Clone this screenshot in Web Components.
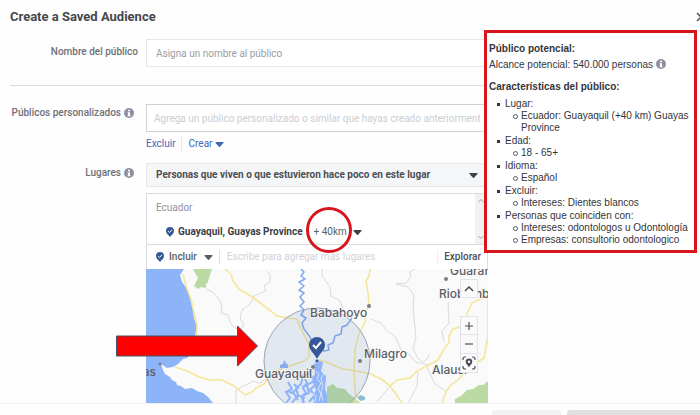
<!DOCTYPE html>
<html lang="es">
<head>
<meta charset="utf-8">
<meta name="viewport" content="width=device-width, initial-scale=1">
<title>Create a Saved Audience</title>
<style>
  body {
    margin: 0;
    background: #fefefe;
    color: #4b4f56;
    font-family: Roboto, "Liberation Sans", sans-serif;
    font-size: 10px;
    line-height: 14px;
  }
</style>
</head>
<body>
<audience-dialog></audience-dialog>

<script>
class InfoIcon extends HTMLElement {
  connectedCallback() {
    this.attachShadow({ mode: 'open' });
    this.shadowRoot.innerHTML = `
      <style>
        :host { display: inline-flex; vertical-align: middle; }
      </style>
      <svg width="10" height="10" viewBox="0 0 10 10" aria-hidden="true">
        <circle cx="5" cy="5" r="5" fill="#8d90a0"/>
        <path d="M4 1.700h2v1.600H4zM3.600 4.200H6v3h.6v1H3.500v-1h.6v-2h-.5z" fill="#fff"/>
      </svg>
    `;
  }
}
customElements.define('info-icon', InfoIcon);

class CaretIcon extends HTMLElement {
  connectedCallback() {
    this.attachShadow({ mode: 'open' });
    this.shadowRoot.innerHTML = `
      <style>
        :host { display: inline-flex; pointer-events: none; }
      </style>
      <svg width="9" height="5" viewBox="0 0 9 5" aria-hidden="true">
        <path d="M1 0h7q1 .2.4 1L5 4.700q-.5.5-1 0L.6 1Q0 .2 1 0z" fill="currentColor"/>
      </svg>
    `;
  }
}
customElements.define('caret-icon', CaretIcon);

class CheckPin extends HTMLElement {
  connectedCallback() {
    this.attachShadow({ mode: 'open' });
    this.shadowRoot.innerHTML = `
      <style>
        :host { display: inline-flex; }
      </style>
      <svg width="8" height="10" viewBox="0 0 8 10" aria-hidden="true">
        <path d="M4 0a4 4 0 0 1 4 4c0 2.500-2.500 4-4 6C2.500 8 0 6.500 0 4a4 4 0 0 1 4-4z" fill="#365899"/>
        <path d="M2.200 4.200l1.300 1.300 2.400-2.600" fill="none" stroke="#fff" stroke-width="1"/>
      </svg>
    `;
  }
}
customElements.define('check-pin', CheckPin);

class FormRow extends HTMLElement {
  connectedCallback() {
    this.attachShadow({ mode: 'open' });
    this.shadowRoot.innerHTML = `
      <style>
        :host {
          display: grid;
          grid-template-columns: 128px minmax(0, 1fr);
          column-gap: 8px;
          align-items: start;
        }
        .label {
          display: flex;
          justify-content: flex-end;
          align-items: center;
          gap: 3px;
          padding-top: var(--label-top, 2px);
          padding-right: var(--label-right, 4px);
          font-weight: 500;
          color: #6d7078;
        }
      </style>
      <div class="label"><slot name="label"></slot></div>
      <div><slot></slot></div>
    `;
  }
}
customElements.define('form-row', FormRow);

class PlaceMap extends HTMLElement {
  connectedCallback() {
    this.attachShadow({ mode: 'open' });
    this.shadowRoot.innerHTML = `
      <style>
        :host { display: block; position: relative; height: 134px; }
        .map { display: block; width: 100%; height: 100%; }
        .map text {
          font: 500 12px Inter, "Liberation Sans", sans-serif;
          fill: #5c5f66;
        }
        .halo {
          stroke: #fafafa;
          stroke-width: 2px;
          stroke-opacity: .6;
          paint-order: stroke;
        }
        .controls {
          position: absolute;
          top: 10px;
          right: 10px;
          display: flex;
          flex-direction: column;
        }
        button {
          display: flex;
          align-items: center;
          justify-content: center;
          width: 18px;
          height: 19px;
          padding: 0;
          border: 1px solid #e0e3e9;
          background: #fafafb;
          color: #4b4f56;
        }
        .up { margin-bottom: 18px; }
        .out { border-top: 0; }
        .arrow { position: absolute; top: 56px; left: -31px; }
      </style>
      <svg class="map" viewBox="146 269 342 134" preserveAspectRatio="xMinYMin slice" role="img" aria-label="Mapa de Guayaquil">
        <rect x="146" y="269" width="700" height="300" fill="#fafafa"/>
        <path d="M146 269H184L180 275 182 282 185 286 189 294 191 302 193 310 194 318 197 326 196 332 194 339 193 348 190 355 187 358 183 359 178 364 173 367 167 368 161 364 163 370 165 374 170 377 172 380 176 382 177 385 181 386 185 389 192 388 197 391 203 393 208 397 213 403H146z" fill="#8db4f9"/>
        <path d="M193 269h19l-2 6-2 7-2 2v4l-5-1-3 2-4-3 2-4 2-4-3-5z" fill="#b9dba3"/>
        <path d="M327 387l6-3 4 4 8 1 4 5 6 4 5 5h-33zM455 399l6-3 6-6 6-1 6-4 4 0 5-4v22h-33z" fill="#b9dba3"/>

        <g fill="none" stroke="#d8dadd" stroke-width="1">
          <path d="M206 289L213 292 219 299 222 306 221 313 228 315 231 324 238 330 244 326 240 318 242 310 251 303 254 296 266 291 264 286 270 282 270 274 266 271"/>
          <path d="M236 404v-14l10-5 7-4 7 2 7-5M322 269l0 7 8 11 1 9 8 4 6 12 12 7M371 319l10 4 6 8 8 5 6 14 7 3 7 9 14 3"/>
          <path d="M396 284l10-1 5-7-1-4 5-3M396 284l12 3 6 8-1 11 1 12 2 19-3 12 4 7M416 357l7 5 4-3 2-5M448 302l1 21-7 8 2 11M427 367l8 17 12 8M390 386l-13 16M418 372l-1 14-9 17"/>
        </g>

        <g fill="none" stroke="#f5e69a" stroke-width="1.600" stroke-linejoin="round">
          <path d="M183 274L186 286 191 299 194 313 197 326 196 338"/>
          <path d="M225 269l6 5 2 7 7 9 11 6 12 9 14 11 10 2 10 1 5 12 7 13 0 13-5 4-17 6"/>
          <path d="M175 367l12 4 12 6 11 3h12l12 6 11 9 7-3 4-4 8-4 6-8 17-11"/>
          <path d="M370 269l-1 7-3 5 2 12 1 12-3 7-1 10-6 12-4 15-1 23 2 31"/>
          <path d="M320 360l11 4 12 5 14 2 14 3 10 5 9 7 6 8 6 9M390 386l7-6 13-2 7-7 8-4 13-7 6-11 5-6 0-7 4-7 10-3 4-12 5-11 16-8"/>
          <path d="M488 291v45l-4 22-16 10-8 10-10 8-4 6-4 11"/>
        </g>

        <g fill="none" stroke="#7fa8ee" stroke-width="1.500" stroke-linejoin="round">
          <path d="M301 269l3 3-3 4 4 3-6 3 5 4-5 4 5 3-4 4 4 5-4 4 4 4-3 5 5 3-4 5 2 6 6 8 3 9"/>
          <path d="M352 318l-5 7-5 2-1 7-6 2-2 7-5 2 1 5-5 1-4-5"/>
        </g>
        <path d="M280 368v-3l3-1 1-4 2 3 1 2 1-2v5z" fill="#8db4f9"/>

        <circle cx="317" cy="361" r="53" fill="#6c8cbc" fill-opacity=".17" stroke="#9ca4b4" stroke-width="1"/>

        <path d="M314 364l5-4 4 3-2 8 5 5-1 13 2 6v8h-13l-1-7 3-6-3-7 2-9z" fill="#8db4f9"/>
        <path d="M312 369l-4 5-5 2-2 8-5 4 2 7-6 8M310 373l4 8-7 4 2 8-7 3 2 7M294 384l4 4-6 5-4-2M288 382l4 7-6 3 4 6-4 5M302 387l6-2M297 395l8 3M315 385l-5 5 5 5-6 7M305 379l2 4-4 5 3 5-4 3 1 7M293 392l5 8M316 375l-4 4" fill="none" stroke="#8db4f9" stroke-width="2"/>
        <path d="M316 371l3 3-2 5 4 4-3 6 3 5-2 7M323 368l1 6-3 4 2 8-2 6 2 9M312 393l4 3-1 6" fill="none" stroke="#dce6f7" stroke-width="1"/>
        <path d="M357 397l4-2 4 2 0 3-5 1z" fill="#8fbcd4"/>

        <g fill="#7c7e82">
          <circle cx="369" cy="306" r="2"/>
          <circle cx="360" cy="361" r="2"/>
          <circle cx="446" cy="279" r="2"/>
          <circle cx="313" cy="367" r="2"/>
          <circle cx="160" cy="364" r="1.500"/>
        </g>

        <text x="156" y="376" text-anchor="end">as</text>
        <g class="halo">
          <text x="255" y="378">Guayaquil</text>
          <text x="310" y="317">Babahoyo</text>
          <text x="364" y="358">Milagro</text>
          <text x="450" y="275">Guaranda</text>
          <text x="439" y="298">Riobamba</text>
          <text x="432" y="374">Alausí</text>
        </g>

        <path d="M317 337a8 8 0 0 1 8 8c0 5-5 8-8 14-3-6-8-9-8-14a8 8 0 0 1 8-8z" fill="#365899"/>
        <path d="M313 345l3 3 5-6" fill="none" stroke="#fff" stroke-width="2"/>
        <circle cx="317" cy="361" r="2" fill="#365899" stroke="#fff" stroke-width=".6"/>
      </svg>
      <div class="controls">
        <button class="up" aria-label="Contraer">
          <svg width="10" height="6" viewBox="0 0 10 6"><path d="M1 5l4-4 4 4" fill="none" stroke="currentColor" stroke-width="1.500"/></svg>
        </button>
        <button aria-label="Acercar">
          <svg width="10" height="10" viewBox="0 0 10 10"><path d="M5 1v8M1 5h8" stroke="currentColor" stroke-width="1.200"/></svg>
        </button>
        <button class="out" aria-label="Alejar">
          <svg width="10" height="10" viewBox="0 0 10 10"><path d="M1 5h8" stroke="currentColor" stroke-width="1.200"/></svg>
        </button>
        <button class="out" aria-label="Marcar ubicación">
          <svg width="14" height="14" viewBox="0 0 14 14" fill="none" stroke="currentColor">
            <path d="M1 4V3q0-2 2-2h1M10 1h1q2 0 2 2v1M13 10v1q0 2-2 2h-1M4 13H3q-2 0-2-2v-1" stroke-width="1.200"/>
            <path d="M7 2.500a3.300 3.300 0 0 1 3.300 3.300C10.300 8 8 9 7 11.500 6 9 3.700 8 3.700 5.800A3.300 3.300 0 0 1 7 2.500z" fill="currentColor" stroke="none"/>
            <circle cx="7" cy="5.800" r="1.200" fill="#fff" stroke="none"/>
          </svg>
        </button>
      </div>
      <svg class="arrow" width="144" height="42" viewBox="0 0 144 42" aria-hidden="true">
        <path d="M1.500 11h121V1l20 20-20 20V31H1.500z" fill="#fe0000" stroke="#44546a" stroke-width="1"/>
      </svg>
    `;
  }
}
customElements.define('place-map', PlaceMap);

class PlacePicker extends HTMLElement {
  connectedCallback() {
    this.attachShadow({ mode: 'open' });
    this.shadowRoot.innerHTML = `
      <style>
        :host { display: block; border: 1px solid #d9dce2; border-bottom: 0; background: #fff; }
        .selected {
          display: grid;
          grid-template-columns: minmax(0, 1fr) 12px;
          height: 50px;
          border-bottom: 1px solid #d9dce2;
        }
        .country { padding: 7px 9px 0; color: #8f939b; }
        .place {
          display: flex;
          align-items: center;
          gap: 4px;
          padding: 10px 0 0 19px;
          font-weight: 700;
          color: #3c4047;
        }
        .scroll {
          display: flex;
          flex-direction: column;
          justify-content: space-between;
          padding: 4px 2px;
          background: #f1f1f2;
        }
        .search { display: flex; align-items: center; height: 24px; padding: 0 6px 0 9px; }
        button, input {
          font: inherit;
          color: inherit;
          background: none;
          border: 0;
          padding: 0;
          margin: 0;
        }
        button { display: flex; align-items: center; }
        .radius { position: relative; gap: 6px; margin-left: 7px; font-weight: 400; color: #5a5e66; }
        .ring {
          position: absolute;
          left: -8px;
          top: -18px;
          width: 40px;
          height: 40px;
          border: 3px solid #d8141c;
          border-radius: 50%;
        }
        .radius caret-icon { color: #3c4047; }
        .mode { gap: 5px; font-weight: 500; color: #5a5e66; }
        .mode caret-icon { margin-left: 2px; }
        input {
          flex: 1;
          min-width: 0;
          margin-left: 6px;
          padding: 0 7px;
          border-left: 1px solid #dddfe2;
          border-right: 1px solid #eceef0;
        }
        input::placeholder { color: #d0d2d6; opacity: 1; }
        .browse { margin-left: 6px; font-weight: 500; color: #4b4f56; }
      </style>
      <div class="selected">
        <div>
          <div class="country">Ecuador</div>
          <div class="place">
            <check-pin></check-pin>
            <span>Guayaquil, Guayas Province</span>
            <button class="radius"><span>+ 40km</span><caret-icon></caret-icon><i class="ring"></i></button>
          </div>
        </div>
        <div class="scroll">
          <svg width="8" height="5" viewBox="0 0 8 5"><path d="M1.500 4L4 1.500 6.500 4" fill="none" stroke="#9a9da2"/></svg>
          <svg width="8" height="5" viewBox="0 0 8 5"><path d="M1.500 1L4 3.500 6.500 1" fill="none" stroke="#9a9da2"/></svg>
        </div>
      </div>
      <div class="search">
        <button class="mode"><check-pin></check-pin>Incluir<caret-icon></caret-icon></button>
        <input type="text" aria-label="Agregar lugares" placeholder="Escribe para agregar más lugares">
        <button class="browse">Explorar</button>
      </div>
    `;
  }
}
customElements.define('place-picker', PlacePicker);

class AudienceSummary extends HTMLElement {
  connectedCallback() {
    this.attachShadow({ mode: 'open' });
    this.shadowRoot.innerHTML = `
      <style>
        :host {
          display: block;
          box-sizing: border-box;
          padding: 9px 2px 3px;
          border: 3px solid #d8141c;
          background: #fff;
          font-family: "Liberation Sans", Arial, sans-serif;
          color: #33353a;
        }
        h2 { margin: 0; font-size: 10px; line-height: 14px; font-weight: 700; }
        p { margin: 2px 0 8px; }
        info-icon { margin-top: -2px; }
        ul { margin: 0; padding: 0; line-height: 12px; list-style: none; }
        .groups { margin-top: 4px; }
        .groups > li { margin-bottom: 1px; }
        li { position: relative; padding-left: 16px; }
        li::before {
          content: "";
          position: absolute;
          top: 5px;
          left: 8px;
          width: 3px;
          height: 3px;
          background: currentColor;
        }
        li li::before {
          top: 4px;
          border: 1px solid #5a5c61;
          border-radius: 50%;
          background: none;
        }
      </style>
      <h2>Público potencial:</h2>
      <p>Alcance potencial: 540.000 personas <info-icon></info-icon></p>
      <h2>Características del público:</h2>
      <ul class="groups">
        <li>Lugar:<ul><li>Ecuador: Guayaquil (+40 km) Guayas Province</li></ul></li>
        <li>Edad:<ul><li>18 - 65+</li></ul></li>
        <li>Idioma:<ul><li>Español</li></ul></li>
        <li>Excluir:<ul><li>Intereses: Dientes blancos</li></ul></li>
        <li>Personas que coinciden con:
          <ul><li>Intereses: odontologos u Odontología</li><li>Empresas: consultorio odontologico</li></ul>
        </li>
      </ul>
    `;
  }
}
customElements.define('audience-summary', AudienceSummary);

class AudienceDialog extends HTMLElement {
  connectedCallback() {
    this.attachShadow({ mode: 'open' });
    this.shadowRoot.innerHTML = `
      <style>
        :host { display: block; height: 100vh; overflow: hidden; }
        header {
          display: flex;
          justify-content: space-between;
          align-items: center;
          height: 30px;
          padding: 4px 0 0 10px;
          box-sizing: border-box;
        }
        h1 { margin: 0; font-size: 13px; line-height: 16px; font-weight: 700; color: #45484d; }
        .close { display: flex; padding: 0; border: 0; background: none; margin-right: -6px; }
        main {
          display: grid;
          grid-template-columns: minmax(0, 1fr) 209px;
          align-items: start;
          padding: 0 3px 0 10px;
        }
        form { padding-top: 9px; }
        audience-summary { position: relative; margin-left: -4px; }
        hr { height: 1px; margin: 18px 0; border: 0; background: #dcdddf; }
        input, select {
          display: block;
          box-sizing: border-box;
          width: 100%;
          font: inherit;
          border: 1px solid #e6e7ea;
          border-radius: 0;
          background: #fff;
          color: #4b4f56;
        }
        input { height: 28px; padding: 0 9px; }
        input::placeholder { color: #9a9da3; opacity: 1; }
        #custom { padding: 0 7px; border-color: #cfd2d6; }
        #custom::placeholder { color: #cbcdd1; }
        .name { --label-top: 6px; --label-right: 0; }
        .places { --label-top: 3px; margin-top: 9px; }
        .links { display: flex; align-items: center; height: 20px; padding-top: 2px; }
        .links a { color: #4267b2; text-decoration: none; }
        .links a + a {
          display: flex;
          align-items: center;
          gap: 3px;
          margin-left: 5px;
          padding-left: 7px;
          border-left: 1px solid #e3e4e7;
        }
        .select { display: grid; align-items: center; margin-bottom: 6px; }
        .select > * { grid-area: 1 / 1; }
        select {
          appearance: none;
          height: 24px;
          padding: 0 24px 0 9px;
          background: #f5f6f7;
          font-weight: 700;
        }
        .select caret-icon { justify-self: end; margin-right: 10px; color: #3c4047; }
        footer {
          display: flex;
          justify-content: flex-end;
          gap: 6px;
          padding-top: 6px;
          border-top: 1px solid #f0f0f1;
        }
        footer button { width: 69px; height: 24px; border: 0; border-radius: 3px; background: #f1f1f1; }
        footer .save { width: 133px; background: #e0e0e0; border-radius: 3px 0 0 3px; }
      </style>
      <header>
        <h1>Create a Saved Audience</h1>
        <button class="close" aria-label="Cerrar">
          <svg width="10" height="10" viewBox="0 0 10 10"><path d="M1 1l8 8M9 1L1 9" stroke="#4b4f56" stroke-width="1.500"/></svg>
        </button>
      </header>
      <main>
        <form>
          <form-row class="name">
            <label slot="label" for="name">Nombre del público</label>
            <input id="name" type="text" placeholder="Asigna un nombre al público">
          </form-row>
          <hr>
          <form-row>
            <label slot="label" for="custom">Públicos personalizados</label>
            <info-icon slot="label"></info-icon>
            <input id="custom" type="text" placeholder="Agrega un público personalizado o similar que hayas creado anteriormente">
            <div class="links"><a href="#excluir">Excluir</a><a href="#crear">Crear<caret-icon></caret-icon></a></div>
          </form-row>
          <form-row class="places">
            <label slot="label" for="people">Lugares</label>
            <info-icon slot="label"></info-icon>
            <div class="select">
              <select id="people">
                <option>Personas que viven o que estuvieron hace poco en este lugar</option>
              </select>
              <caret-icon></caret-icon>
            </div>
            <place-picker></place-picker>
            <place-map></place-map>
          </form-row>
        </form>
        <audience-summary></audience-summary>
      </main>
      <footer>
        <button aria-label="Cancelar"></button>
        <button class="save" aria-label="Crear público"></button>
      </footer>
    `;
  }
}
customElements.define('audience-dialog', AudienceDialog);
</script>
</body>
</html>
